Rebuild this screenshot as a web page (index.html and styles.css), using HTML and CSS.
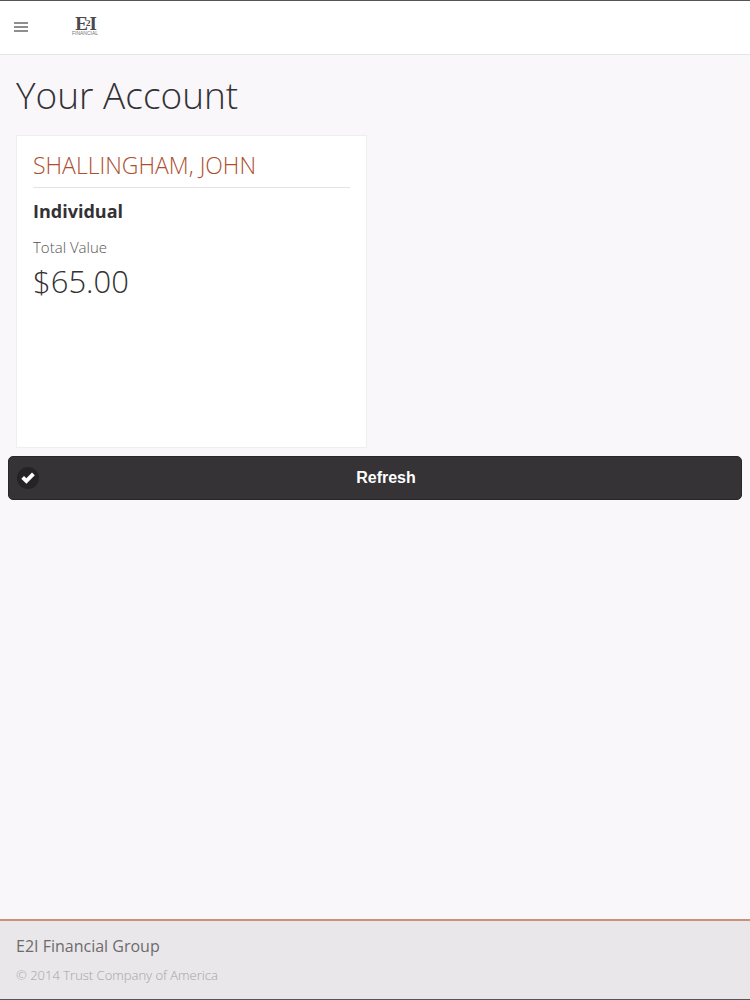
FILE: index.html
```
<!DOCTYPE html>
<html lang="en">
  <head>
    <meta charset="UTF-8" />
    <meta name="viewport" content="width=device-width, initial-scale=1.0" />
    <title>Your Account</title>
    <link rel="stylesheet" href="styles.css">
  </head>
  <body>
    <header class="top-bar">
      <button type="button" class="menu-btn" aria-label="Menu">
        <svg width="14" height="12" viewBox="0 0 14 12">
          <path d="M0 2h14M0 6h14M0 10h14" stroke="#8e8e8e" stroke-width="2" />
        </svg>
      </button>
      <a href="#" class="logo" aria-label="E2I Financial">
        <svg width="34" height="30" viewBox="0 0 34 30">
          <text class="logo-mark" x="16" y="18" font-size="19" text-anchor="middle">E<tspan dx="-2" dy="-4" font-size="9">2</tspan><tspan dx="-1" dy="4">I</tspan></text>
          <text class="logo-sub" x="15" y="23" font-size="5" text-anchor="middle">FINANCIAL</text>
        </svg>
      </a>
    </header>

    <main class="content">
      <h1>Your Account</h1>

      <div class="accounts">
        <section class="account-card">
          <h2>SHALLINGHAM, JOHN</h2>
          <h3>Individual</h3>
          <p class="value-label">Total Value</p>
          <p class="value">$65.00</p>
        </section>
      </div>
    </main>

    <button type="button" class="refresh-btn">
      <span class="check-icon">
        <svg width="14" height="12" viewBox="0 0 14 12">
          <path d="M0.3 6.8L3 4L5.4 6.2L11 0.4L13.8 3.3L5.4 11.8Z" fill="#fff" />
        </svg>
      </span>
      <span class="refresh-text">Refresh</span>
    </button>

    <footer class="footer">
      <p class="company">E2I Financial Group</p>
      <p class="copyright">© 2014 Trust Company of America</p>
    </footer>
  </body>
</html>
```

FILE: styles.css
```
* {
  box-sizing: border-box;
}

body {
  margin: 0;
  min-height: 100vh;
  display: flex;
  flex-direction: column;
  background: #f9f7fa;
  color: #333134;
  font-family: "Open Sans", sans-serif;
  border-top: 1px solid #565456;
  border-bottom: 1px solid #565456;
}

h1,
h2,
h3,
p {
  margin: 0;
  font-weight: 300;
}

/* Header */
.top-bar {
  display: flex;
  align-items: center;
  gap: 38px;
  height: 54px;
  padding: 0 10px 1px;
  background: #fff;
  border-bottom: 1px solid #e6e4e7;
}

.menu-btn {
  display: flex;
  padding: 4px;
  border: none;
  background: none;
  cursor: pointer;
}

.logo {
  display: flex;
}

.logo-mark {
  font-family: "Liberation Serif", serif;
  font-weight: 700;
  fill: #4a484b;
}

.logo-sub {
  font-family: "Liberation Sans", sans-serif;
  fill: #77757a;
}

/* Account */
.content {
  padding: 16px 16px 8px;
}

h1 {
  font-size: 37px;
  line-height: 48px;
  margin-bottom: 16px;
}

.accounts {
  display: grid;
  grid-template-columns: 1fr 1fr;
  gap: 16px;
}

.account-card {
  min-height: 313px;
  padding: 14px 16px;
  background: #fff;
  border: 1px solid #f0eef1;
}

.account-card h2 {
  padding-bottom: 7px;
  border-bottom: 1px solid #e2e6e3;
  color: #ac4f2f;
  font-size: 23px;
  line-height: 30px;
}

.account-card h3 {
  margin-top: 11px;
  font-size: 18px;
  font-weight: 700;
  line-height: 24px;
}

.value-label {
  margin-top: 12px;
  color: #555356;
  font-size: 15px;
  line-height: 24px;
}

.value {
  font-size: 31px;
  line-height: 44px;
}

/* Refresh button */
.refresh-btn {
  display: flex;
  align-items: center;
  height: 44px;
  margin: 0 8px;
  padding: 0 8px;
  border: 1px solid #29272a;
  border-radius: 5px;
  background: #353336;
  color: #fff;
  font-family: "Liberation Sans", sans-serif;
  font-size: 16px;
  font-weight: 700;
  cursor: pointer;
}

.check-icon {
  display: flex;
  align-items: center;
  justify-content: center;
  width: 22px;
  height: 22px;
  border-radius: 50%;
  background: #252326;
}

.refresh-text {
  flex: 1;
  text-align: center;
}

/* Footer */
.footer {
  margin-top: auto;
  padding: 13px 16px 15px;
  background: #e9e7e9;
  border-top: 2px solid #cc8f78;
}

.company {
  color: #6d6b6e;
  font-size: 16px;
  font-weight: 400;
  line-height: 24px;
}

.copyright {
  margin-top: 8px;
  color: #a5a3a6;
  font-size: 13px;
  line-height: 18px;
}
```
